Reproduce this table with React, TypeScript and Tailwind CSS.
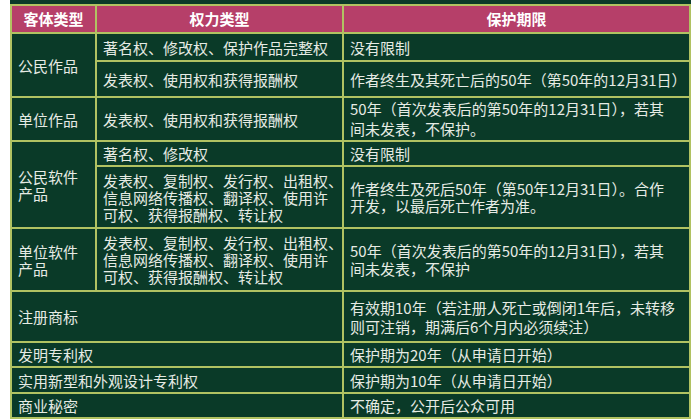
import React from 'react';

// shared cell styles
const cell =
  'flex items-center bg-[#0a3a28] pl-[6px] text-[15px] leading-[17px] text-[#e6ebe4] whitespace-nowrap';
const head =
  'flex items-center justify-center bg-[#b63f69] text-[15px] font-bold text-white';

export default function App() {
  return (
    <div className="min-h-screen bg-white font-['Noto_Sans_CJK_SC','Noto_Sans',sans-serif]">
      <div className="ml-[10px] w-[681px] bg-[#0a3a28] pt-[4px]">
        <div className="grid grid-cols-[83px_245px_345px] grid-rows-[26px_26px_34px_42px_23px_60px_61px_49px_23px_24px_23px] gap-[2px] bg-[#b1c262] p-[2px]">
          {/* Header */}
          <div className={head}>客体类型</div>
          <div className={head}>权力类型</div>
          <div className={head}>保护期限</div>

          {/* 公民作品 */}
          <div className={`${cell} row-span-2 pl-[5px]`}>公民作品</div>
          <div className={cell}>著名权、修改权、保护作品完整权</div>
          <div className={cell}>没有限制</div>
          <div className={cell}>发表权、使用权和获得报酬权</div>
          <div className={cell}>作者终生及其死亡后的50年（第50年的12月31日）</div>

          {/* 单位作品 */}
          <div className={`${cell} pl-[5px]`}>单位作品</div>
          <div className={cell}>发表权、使用权和获得报酬权</div>
          <div className={`${cell} leading-[20px]`}>
            <p>
              50年（首次发表后的第50年的12月31日），若其
              <br />
              间未发表，不保护。
            </p>
          </div>

          {/* 公民软件产品 */}
          <div className={`${cell} row-span-2 pl-[5px] leading-[16px]`}>
            <p>
              公民软件
              <br />
              产品
            </p>
          </div>
          <div className={cell}>著名权、修改权</div>
          <div className={cell}>没有限制</div>
          <div className={cell}>
            <p>
              发表权、复制权、发行权、出租权、
              <br />
              信息网络传播权、翻译权、使用许
              <br />
              可权、获得报酬权、转让权
            </p>
          </div>
          <div className={`${cell} leading-[15px]`}>
            <p>
              作者终生及死后50年（第50年12月31日）。合作
              <br />
              开发，以最后死亡作者为准。
            </p>
          </div>

          {/* 单位软件产品 */}
          <div className={`${cell} pl-[5px] leading-[16px]`}>
            <p>
              单位软件
              <br />
              产品
            </p>
          </div>
          <div className={cell}>
            <p>
              发表权、复制权、发行权、出租权、
              <br />
              信息网络传播权、翻译权、使用许
              <br />
              可权、获得报酬权、转让权
            </p>
          </div>
          <div className={`${cell} leading-[18px]`}>
            <p>
              50年（首次发表后的第50年的12月31日），若其
              <br />
              间未发表，不保护
            </p>
          </div>

          {/* 商标 / 专利 / 秘密 */}
          <div className={`${cell} col-span-2 pl-[5px]`}>注册商标</div>
          <div className={`${cell} leading-[19px]`}>
            <p>
              有效期10年（若注册人死亡或倒闭1年后，未转移
              <br />
              则可注销，期满后6个月内必须续注）
            </p>
          </div>
          <div className={`${cell} col-span-2 pl-[5px]`}>发明专利权</div>
          <div className={cell}>保护期为20年（从申请日开始）</div>
          <div className={`${cell} col-span-2 pl-[5px]`}>实用新型和外观设计专利权</div>
          <div className={cell}>保护期为10年（从申请日开始）</div>
          <div className={`${cell} col-span-2 pl-[5px]`}>商业秘密</div>
          <div className={cell}>不确定，公开后公众可用</div>
        </div>
      </div>
    </div>
  );
}
